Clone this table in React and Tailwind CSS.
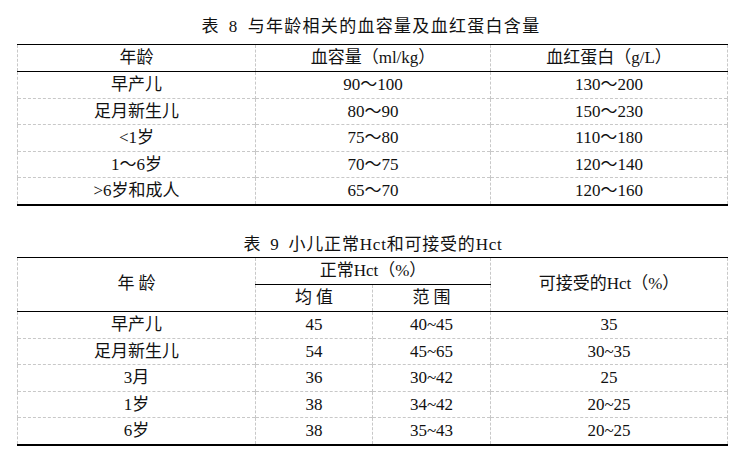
const font = { fontFamily: '"Liberation Serif", "Noto Sans CJK SC", serif' };

const volumeRows = [
  ['早产儿', '90～100', '130～200'],
  ['足月新生儿', '80～90', '150～230'],
  ['<1岁', '75～80', '110～180'],
  ['1～6岁', '70～75', '120～140'],
  ['>6岁和成人', '65～70', '120～160'],
];

const hctRows = [
  ['早产儿', '45', '40~45', '35'],
  ['足月新生儿', '54', '45~65', '30~35'],
  ['3月', '36', '30~42', '25'],
  ['1岁', '38', '34~42', '20~25'],
  ['6岁', '38', '35~43', '20~25'],
];

const cell = 'p-0 text-center font-normal border-x border-dashed border-x-[#c8c8c8]';
const solidBottom = ' border-b [border-bottom-style:solid] border-b-black';

export default function App() {
  return (
    <div className="w-[748px] h-[461px] bg-white text-[17px] text-[#111] pt-[15px]" style={font}>
      <div className="h-[24px] leading-[24px] text-center mb-[5px] pr-[6px] tracking-[1.3px]">
        表<span className="mx-[9px]">8</span>与年龄相关的血容量及血红蛋白含量
      </div>

      <table className="ml-[17px] w-[710px] table-fixed border-collapse">
        <colgroup>
          <col className="w-[238px]" />
          <col className="w-[235px]" />
          <col className="w-[237px]" />
        </colgroup>
        <thead>
          <tr className="h-[27px] border-t border-b border-solid border-black">
            <th className={cell}>年龄</th>
            <th className={cell}>血容量（ml/kg）</th>
            <th className={cell}>血红蛋白（g/L）</th>
          </tr>
        </thead>
        <tbody>
          {volumeRows.map((r, i) => (
            <tr
              key={i}
              className={
                i === volumeRows.length - 1
                  ? 'h-[27px] border-b-2 border-solid border-black'
                  : 'h-[26px] border-b border-dashed border-[#c8c8c8]'
              }
            >
              {r.map((c, j) => (
                <td key={j} className={cell}>{c}</td>
              ))}
            </tr>
          ))}
        </tbody>
      </table>

      <div className="h-[24px] leading-[24px] text-center mt-[27px] pr-[2px] tracking-[0.8px]">
        表<span className="mx-[9px]">9</span>小儿正常Hct和可接受的Hct
      </div>

      <table className="ml-[17px] w-[710px] table-fixed border-collapse">
        <colgroup>
          <col className="w-[238px]" />
          <col className="w-[117px]" />
          <col className="w-[118px]" />
          <col className="w-[237px]" />
        </colgroup>
        <thead>
          <tr className="h-[27px] border-t border-solid border-black">
            <th rowSpan={2} className={cell + solidBottom}>年 龄</th>
            <th colSpan={2} className={cell + solidBottom}>正常Hct（%）</th>
            <th rowSpan={2} className={cell + solidBottom}>可接受的Hct（%）</th>
          </tr>
          <tr className="h-[27px] border-b border-solid border-black">
            <th className={cell + solidBottom}>均 值</th>
            <th className={cell + solidBottom}>范 围</th>
          </tr>
        </thead>
        <tbody>
          {hctRows.map((r, i) => (
            <tr
              key={i}
              className={
                i === hctRows.length - 1
                  ? 'h-[26px] border-b-2 border-solid border-black'
                  : i === 0
                  ? 'h-[27px] border-b border-dashed border-[#c8c8c8]'
                  : 'h-[26px] border-b border-dashed border-[#c8c8c8]'
              }
            >
              {r.map((c, j) => (
                <td key={j} className={cell}>{c}</td>
              ))}
            </tr>
          ))}
        </tbody>
      </table>
    </div>
  );
}
